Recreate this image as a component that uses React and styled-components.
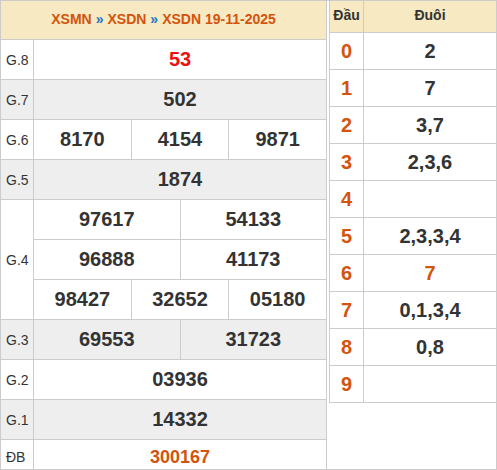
import React from "react";
import styled, { createGlobalStyle } from "styled-components";

const GlobalStyle = createGlobalStyle`
  html, body { margin: 0; padding: 0; background: #fff; }
  body { font-family: "Liberation Sans", Arial, sans-serif; color: #333; }
`;

const BORDER = "#cccccc";
const ORANGE = "#d2540d";
const ALT = "#eeeeee";
const HEAD_BG = "#f7e9c2";

const Wrapper = styled.div`
  width: 497px;
  height: 470px;
  box-sizing: border-box;
  border: 1px solid ${BORDER};
  display: flex;
  align-items: flex-start;
  overflow: hidden;
`;

const LeftTable = styled.div`
  width: 326px;
  flex: none;
  box-sizing: border-box;
  border-right: 1px solid ${BORDER};
  display: flex;
  flex-direction: column;
`;

const Header = styled.div`
  height: 38px;
  box-sizing: border-box;
  background: ${HEAD_BG};
  display: flex;
  align-items: center;
  justify-content: center;
  padding-bottom: 2px;
  font-size: 14px;
  font-weight: bold;
  color: ${ORANGE};
`;

const Sep = styled.span`
  color: #1b75c9;
  margin: 0 4px;
`;

const PrizeRow = styled.div`
  display: flex;
  background: ${(p) => (p.$alt ? ALT : "#fff")};
  border-top: 1px solid ${BORDER};
`;

const Label = styled.div`
  width: 33px;
  flex: none;
  box-sizing: border-box;
  border-right: 1px solid ${BORDER};
  display: flex;
  align-items: center;
  padding-left: 5px;
  font-size: 14px;
  color: #333;
`;

const Values = styled.div`
  flex: 1;
  display: flex;
  flex-direction: column;
`;

const Line = styled.div`
  display: flex;
  height: ${(p) => p.$h || 39}px;
  & + & {
    border-top: 1px solid ${BORDER};
  }
`;

const Num = styled.div`
  flex: 1;
  display: flex;
  align-items: center;
  justify-content: center;
  font-weight: bold;
  font-size: ${(p) => p.$size || 20}px;
  color: ${(p) => p.$color || "#333"};
  & + & {
    border-left: 1px solid ${BORDER};
  }
`;

const RightTable = styled.div`
  flex: 1;
  margin-left: 2px;
  border-left: 1px solid ${BORDER};
  border-bottom: 1px solid ${BORDER};
  display: flex;
  flex-direction: column;
`;

const RRow = styled.div`
  display: flex;
  height: ${(p) => p.$h}px;
  background: ${(p) => (p.$head ? HEAD_BG : "#fff")};
  & + & {
    border-top: 1px solid ${BORDER};
  }
`;

const RHead = styled.div`
  width: 34px;
  flex: none;
  box-sizing: border-box;
  border-right: 1px solid ${BORDER};
  display: flex;
  align-items: center;
  justify-content: center;
  font-weight: bold;
  font-size: ${(p) => (p.$title ? 14 : 20)}px;
  color: ${(p) => (p.$title ? "#333" : ORANGE)};
  padding-bottom: ${(p) => (p.$title ? 4 : 0)}px;
`;

const RTail = styled.div`
  flex: 1;
  display: flex;
  align-items: center;
  justify-content: center;
  font-weight: bold;
  font-size: ${(p) => (p.$title ? 14 : 20)}px;
  color: ${(p) => p.$color || "#333"};
  padding-bottom: ${(p) => (p.$title ? 4 : 0)}px;
`;

const prizes = [
  { label: "G.8", lines: [["53"]], color: "#ee1111" },
  { label: "G.7", lines: [["502"]], alt: true },
  { label: "G.6", lines: [["8170", "4154", "9871"]] },
  { label: "G.5", lines: [["1874"]], alt: true },
  {
    label: "G.4",
    lines: [
      ["97617", "54133"],
      ["96888", "41173"],
      ["98427", "32652", "05180"],
    ],
  },
  { label: "G.3", lines: [["69553", "31723"]], alt: true },
  { label: "G.2", lines: [["03936"]] },
  { label: "G.1", lines: [["14332"]], alt: true },
  { label: "ĐB", lines: [["300167"]], color: ORANGE, size: 18, h: 34 },
];

const tails = [
  ["2"],
  ["7"],
  ["3,7"],
  ["2,3,6"],
  [""],
  ["2,3,3,4"],
  ["7", ORANGE],
  ["0,1,3,4"],
  ["0,8"],
  [""],
];

export default function App() {
  return (
    <>
      <GlobalStyle />
      <Wrapper>
        <LeftTable>
          <Header>
            XSMN<Sep>»</Sep>XSDN<Sep>»</Sep>XSDN 19-11-2025
          </Header>
          {prizes.map((p) => (
            <PrizeRow key={p.label} $alt={p.alt}>
              <Label>{p.label}</Label>
              <Values>
                {p.lines.map((line, i) => (
                  <Line key={i} $h={p.h}>
                    {line.map((n) => (
                      <Num key={n} $color={p.color} $size={p.size}>
                        {n}
                      </Num>
                    ))}
                  </Line>
                ))}
              </Values>
            </PrizeRow>
          ))}
        </LeftTable>
        <RightTable>
          <RRow $head $h={31}>
            <RHead $title>Đầu</RHead>
            <RTail $title>Đuôi</RTail>
          </RRow>
          {tails.map(([t, c], i) => (
            <RRow key={i} $h={36}>
              <RHead>{i}</RHead>
              <RTail $color={c}>{t}</RTail>
            </RRow>
          ))}
        </RightTable>
      </Wrapper>
    </>
  );
}
